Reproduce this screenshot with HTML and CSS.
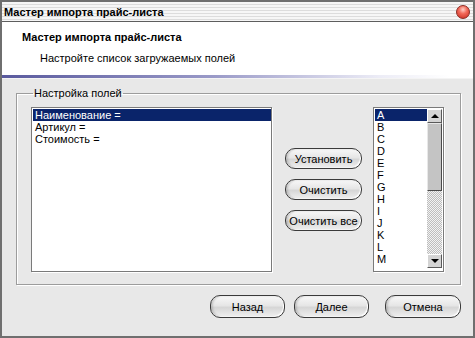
FILE: index.html
```html
<!DOCTYPE html>
<html lang="ru">
<head>
    <meta charset="UTF-8">
    <title>Мастер импорта прайс-листа</title>
    <link rel="stylesheet" href="styles.css">
</head>
<body>
    <div class="window">
        <div class="titlebar">
            <span class="title">Мастер импорта прайс-листа</span>
            <span class="close-btn"></span>
        </div>
        <!-- шапка мастера -->
        <div class="header">
            <div class="header-title">Мастер импорта прайс-листа</div>
            <div class="header-sub">Настройте список загружаемых полей</div>
        </div>
        <div class="header-line"></div>
        <div class="body">
            <fieldset class="group">
                <legend>Настройка полей</legend>
                <div class="group-row">
                    <div class="listbox fields">
                        <div class="item selected">Наименование =</div>
                        <div class="item">Артикул =</div>
                        <div class="item">Стоимость =</div>
                    </div>
                    <div class="actions">
                        <button class="btn btn-small">Установить</button>
                        <button class="btn btn-small">Очистить</button>
                        <button class="btn btn-small">Очистить все</button>
                    </div>
                    <div class="listbox columns">
                        <div class="letters">
                            <div class="letter selected">A</div>
                            <div class="letter">B</div>
                            <div class="letter">C</div>
                            <div class="letter">D</div>
                            <div class="letter">E</div>
                            <div class="letter">F</div>
                            <div class="letter">G</div>
                            <div class="letter">H</div>
                            <div class="letter">I</div>
                            <div class="letter">J</div>
                            <div class="letter">K</div>
                            <div class="letter">L</div>
                            <div class="letter">M</div>
                        </div>
                        <div class="scrollbar">
                            <div class="sb-btn"><span class="arrow-up"></span></div>
                            <div class="sb-thumb"></div>
                            <div class="sb-track"></div>
                            <div class="sb-btn"><span class="arrow-down"></span></div>
                        </div>
                    </div>
                </div>
            </fieldset>
            <div class="footer">
                <button class="btn btn-big">Назад</button>
                <button class="btn btn-big">Далее</button>
                <button class="btn btn-big btn-cancel">Отмена</button>
            </div>
        </div>
    </div>
</body>
</html>
```
FILE: styles.css
```css
body {
    margin: 0;
    padding: 0;
    font-family: 'Liberation Sans', Arial, sans-serif;
    font-size: 11px;
    color: #000;
    background-color: #e8e8e8;
}
.window {
    width: 475px;
    height: 338px;
    box-sizing: border-box;
    border: 2px solid #6f6f6f;
    background-color: #e8e8e8;
    display: flex;
    flex-direction: column;
}
/* заголовок окна */
.titlebar {
    height: 19px;
    border-bottom: 1px solid #5e5e5e;
    background: repeating-linear-gradient(#f6f6f6 0, #f6f6f6 2px, #dcdcdc 2px, #dcdcdc 3px);
    display: flex;
    align-items: center;
    justify-content: space-between;
    padding: 0 3px 0 2px;
}
.title {
    font-weight: bold;
    font-size: 11px;
}
.close-btn {
    width: 12px;
    height: 12px;
    border-radius: 50%;
    border: 1px solid #8a2a22;
    background: radial-gradient(circle at 50% 30%, #ffd0c8 0, #f26a5a 40%, #c8281c 100%);
}
.header {
    height: 53px;
    background-color: #ffffff;
    padding: 9px 0 0 20px;
    box-sizing: border-box;
}
.header-title {
    font-weight: bold;
    font-size: 11px;
    line-height: 13px;
}
.header-sub {
    margin-top: 8px;
    padding-left: 18px;
    line-height: 13px;
}
.header-line {
    height: 3px;
    background: linear-gradient(to right, #5a5a9e 0, #9a9ac8 45%, #ececf6 80%, #ffffff 95%);
}
.body {
    flex-grow: 1;
    padding: 8px 12px 0 14px;
    border-top: 1px solid #f4f4f4;
}
/* группа полей */
.group {
    margin: 0;
    width: 445px;
    box-sizing: border-box;
    border: 1px solid #9c9c9c;
    box-shadow: 1px 1px 0 #ffffff, inset 1px 1px 0 #ffffff;
    padding: 8px 15px 12px 14px;
}
.group legend {
    padding: 0 1px;
    margin-left: 2px;
    line-height: 12px;
}
.group-row {
    display: flex;
    align-items: center;
}
.listbox {
    background-color: #ffffff;
    border: 1px solid #7a7a7a;
    box-shadow: 1px 1px 0 #ffffff;
    height: 165px;
    box-sizing: border-box;
}
.fields {
    width: 241px;
    padding: 1px 0 0 1px;
}
.item {
    line-height: 12px;
    padding-left: 2px;
    font-size: 11px;
}
.selected {
    background-color: #0a246a;
    color: #ffffff;
}
.actions {
    width: 77px;
    margin: 0 11px 0 13px;
    display: flex;
    flex-direction: column;
    gap: 10px;
}
.btn {
    font-family: 'Liberation Sans', Arial, sans-serif;
    font-size: 11px;
    color: #000;
    border: 1px solid #3a3a3a;
    border-radius: 10px;
    background: linear-gradient(#f8f8f8 0, #e6e6e6 45%, #d6d6d6 55%, #f0f0f0 100%);
    box-shadow: inset 2px 0 2px rgba(0, 0, 0, 0.15), inset -1px -1px 1px #ffffff;
    padding: 0;
}
.btn-small {
    height: 21px;
    width: 77px;
}
.columns {
    width: 71px;
    display: flex;
    padding: 1px;
}
.letters {
    flex-grow: 1;
}
.letter {
    line-height: 12px;
    font-size: 11px;
    padding-left: 2px;
    font-family: 'Liberation Sans Narrow', 'Liberation Sans', Arial, sans-serif;
}
.scrollbar {
    width: 15px;
    display: flex;
    flex-direction: column;
    margin-bottom: 2px;
}
.sb-btn {
    height: 14px;
    background-color: #d4d4d4;
    border: 1px solid;
    border-color: #ffffff #5a5a5a #5a5a5a #ffffff;
    box-sizing: border-box;
    display: flex;
    align-items: center;
    justify-content: center;
}
.arrow-up {
    border-left: 4px solid transparent;
    border-right: 4px solid transparent;
    border-bottom: 4px solid #000;
}
.arrow-down {
    border-left: 4px solid transparent;
    border-right: 4px solid transparent;
    border-top: 4px solid #000;
}
.sb-thumb {
    height: 68px;
    background-color: #c4c4c4;
    border: 1px solid;
    border-color: #e8e8e8 #4a4a4a #4a4a4a #e8e8e8;
    box-sizing: border-box;
}
.sb-track {
    flex-grow: 1;
    background: repeating-conic-gradient(#bdbdbd 0 25%, #f2f2f2 0 50%) 0 0 / 2px 2px;
}
/* нижние кнопки */
.footer {
    display: flex;
    justify-content: flex-end;
    width: 445px;
    margin-top: 10px;
}
.btn-big {
    height: 23px;
    width: 75px;
    font-size: 11px;
    margin-left: 9px;
}
.btn-cancel {
    width: 76px;
    margin-left: 16px;
}
```
